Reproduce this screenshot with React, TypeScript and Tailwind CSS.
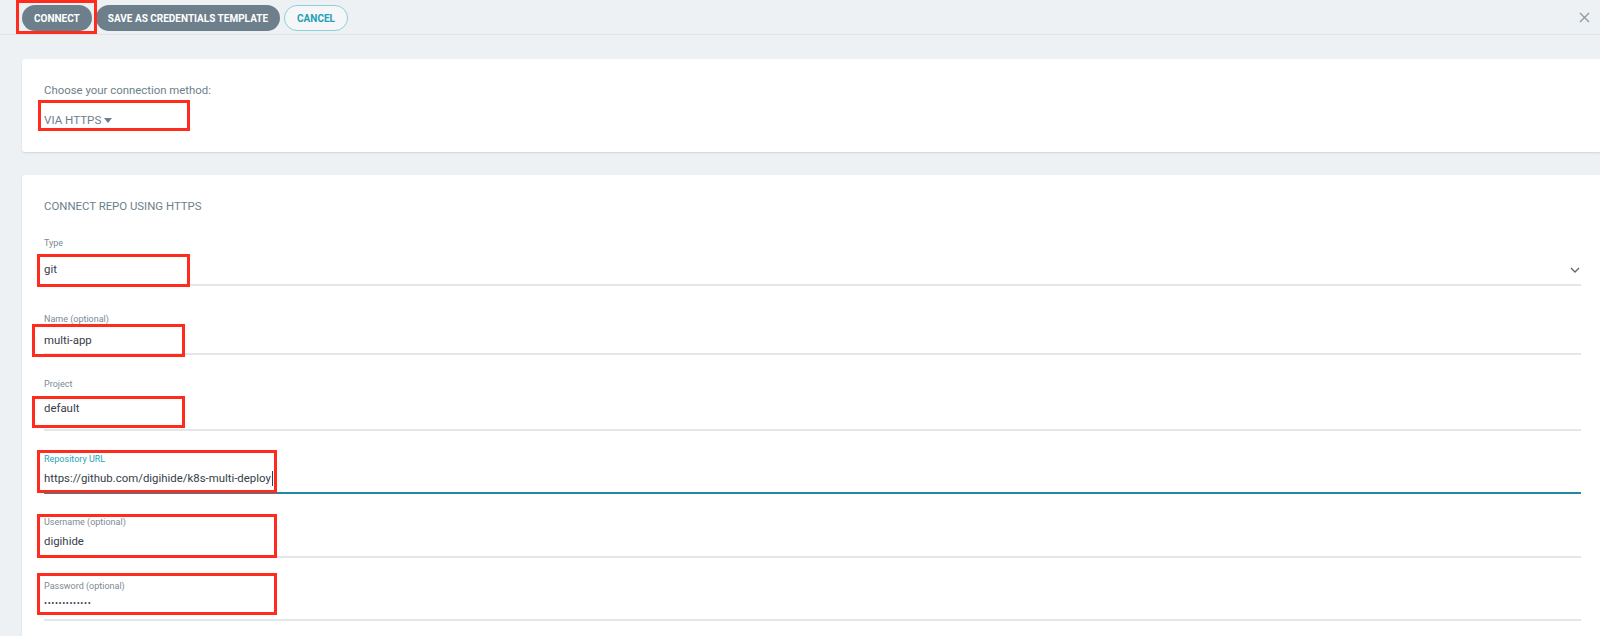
import { ReactNode } from 'react';

const RedBox = ({ className }: { className: string }) => (
    <div className={`absolute border-[3px] border-[#ff2b1c] pointer-events-none ${className}`} />
);

interface FieldProps {
    label: string;
    children: ReactNode;
    focused?: boolean;
    box: string;
    className?: string;
    valueClass: string;
    right?: ReactNode;
}

function Field({ label, children, focused = false, box, className = '', valueClass, right }: FieldProps) {
    return (
        <div className={`relative ${className}`}>
            <div className={`text-[9px] leading-[12px] ${focused ? 'text-[#2aa5b8]' : 'text-[#7c8a94]'}`}>{label}</div>
            <div
                className={`relative flex items-center text-[11.4px] leading-[16px] text-[#363c4a] border-b-2 ${
                    focused ? 'border-[#2586a0]' : 'border-[#e3e7ea]'
                } ${valueClass}`}
            >
                {children}
                {right}
            </div>
            <RedBox className={box} />
        </div>
    );
}

export default function App() {
    return (
        <div className="w-[1600px] h-[636px] overflow-hidden bg-[#eef1f4] font-['Roboto',sans-serif]">
            {/* Top bar */}
            <div className="relative h-[35px] flex items-center gap-[4px] pl-[22px] pt-[2px] border-b border-[#dfe4e8]">
                <div className="relative">
                    <button className="h-[26px] px-[12px] rounded-full bg-[#6d7f8b] text-white text-[10px] font-bold">
                        CONNECT
                    </button>
                    <RedBox className="-left-[6px] -top-[5px] w-[81px] h-[34px]" />
                </div>
                <button className="h-[26px] px-[12px] rounded-full bg-[#6d7f8b] text-white text-[10px] font-bold">
                    SAVE AS CREDENTIALS TEMPLATE
                </button>
                <button className="h-[26px] px-[12px] rounded-full border border-[#8ed0da] bg-white/40 text-[#1e9fb5] text-[10px] font-bold">
                    CANCEL
                </button>
                <svg className="absolute right-[10px] top-[12px]" width="11" height="11" viewBox="0 0 11 11">
                    <path d="M1 1L10 10M10 1L1 10" stroke="#8a99a4" strokeWidth="1.3" />
                </svg>
            </div>

            <div className="pl-[22px]">
                {/* Connection method */}
                <div className="mt-[24px] h-[93px] bg-white shadow-[0_1px_2px_rgba(0,0,0,0.12)] rounded-l-[3px] pl-[22px] pt-[23px]">
                    <div className="text-[11.4px] leading-[16px] text-[#6d7f8b]">Choose your connection method:</div>
                    <div className="relative mt-[14px] text-[11.6px] leading-[16px] text-[#6d7f8b] flex items-center">
                        VIA HTTPS
                        <svg className="ml-[3px]" width="8" height="5" viewBox="0 0 8 5">
                            <path d="M0 0H8L4 5Z" fill="#6d7f8b" />
                        </svg>
                        <RedBox className="-left-[6px] -top-[12px] w-[152px] h-[31px]" />
                    </div>
                </div>

                {/* Connect repo form */}
                <div className="mt-[23px] h-[470px] bg-white shadow-[0_1px_2px_rgba(0,0,0,0.12)] rounded-l-[3px] pl-[22px] pr-[19px] pt-[23px]">
                    <div className="text-[11.4px] leading-[16px] text-[#6d7f8b]">CONNECT REPO USING HTTPS</div>

                    <Field
                        label="Type"
                        className="mt-[23px]"
                        valueClass="mt-[12px] pb-[7px]"
                        box="-left-[7px] top-[17px] w-[153px] h-[33px]"
                        right={
                            <svg className="absolute right-[1px] top-[6px]" width="10" height="6" viewBox="0 0 10 6">
                                <path d="M1 1L5 5L9 1" stroke="#5b6770" strokeWidth="1.3" fill="none" />
                            </svg>
                        }
                    >
                        git
                    </Field>

                    <Field
                        label="Name (optional)"
                        className="mt-[27px]"
                        valueClass="mt-[7px] pb-[5px]"
                        box="-left-[12px] top-[11px] w-[153px] h-[33px]"
                    >
                        multi-app
                    </Field>

                    <Field
                        label="Project"
                        className="mt-[23px]"
                        valueClass="mt-[10px] pb-[13px]"
                        box="-left-[12px] top-[18px] w-[153px] h-[32px]"
                    >
                        default
                    </Field>

                    <Field
                        label="Repository URL"
                        focused
                        className="mt-[22px]"
                        valueClass="mt-[5px] pb-[6px]"
                        box="-left-[7px] -top-[3px] w-[240px] h-[43px]"
                    >
                        https://github.com/digihide/k8s-multi-deploy
                        <span className="ml-[1px] w-[1px] h-[15px] bg-[#363c4a]" />
                    </Field>

                    <Field
                        label="Username (optional)"
                        className="mt-[22px]"
                        valueClass="mt-[5px] pb-[7px]"
                        box="-left-[7px] -top-[2px] w-[240px] h-[44px]"
                    >
                        digihide
                    </Field>

                    <Field
                        label="Password (optional)"
                        className="mt-[22px]"
                        valueClass="mt-[3px] pb-[8px]"
                        box="-left-[7px] -top-[7px] w-[240px] h-[42px]"
                    >
                        <span className="text-[9px] tracking-[0.6px]">•••••••••••••</span>
                    </Field>
                </div>
            </div>
        </div>
    );
}
